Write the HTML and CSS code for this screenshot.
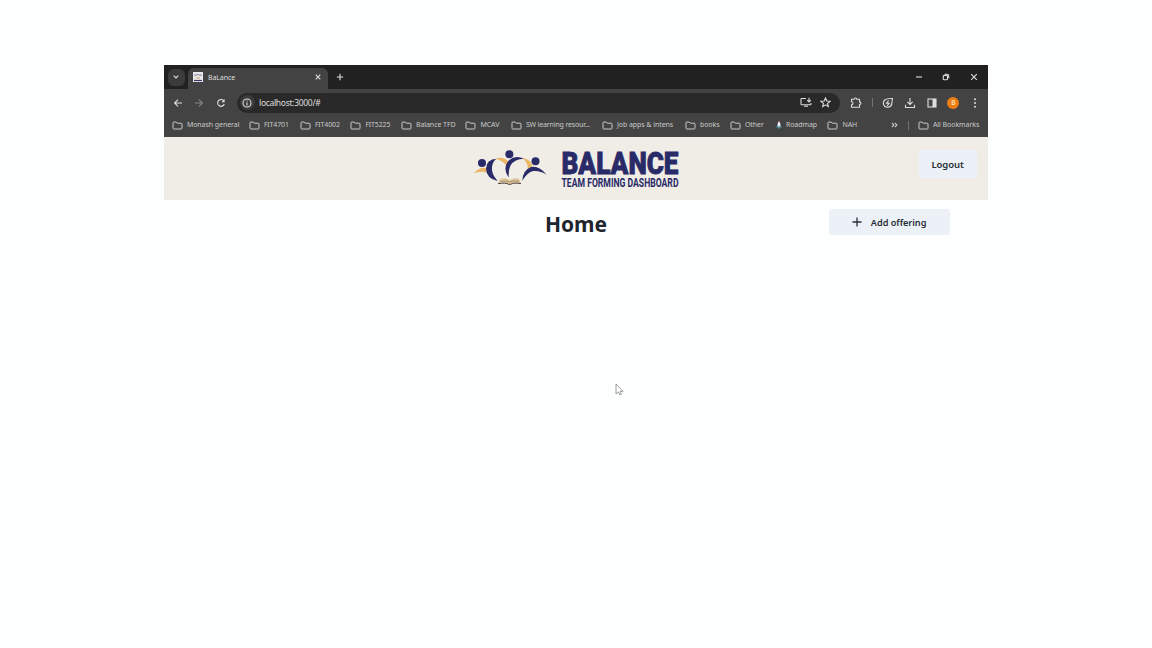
FILE: index.html
```html
<!DOCTYPE html>
<html lang="en">
<head>
<meta charset="utf-8">
<title>BaLance</title>
<link rel="stylesheet" href="styles.css">
</head>
<body>
<svg width="0" height="0" class="defs">
  <symbol id="folder" viewBox="0 0 11 9"><path d="M1 7.2V1.8Q1 1 1.8 1H4l1.2 1.2h4Q10 2.2 10 3v4.2q0 .8-.8.8H1.8Q1 8 1 7.200z" fill="none" stroke="currentColor" stroke-width="1"/></symbol>
</svg>
<div class="window">
  <div class="tabs">
    <span class="tab-search"><svg width="6" height="4" viewBox="0 0 6 4"><path d="M.7.7 3 3 5.300.7" class="line"/></svg></span>
    <div class="tab">
      <svg class="favicon" width="10" height="10" viewBox="0 0 10 10"><path fill="#e8e8ee" d="M0 0h10v10H0z"/><path d="M1 3.500q1-1.500 2 0 2-2.500 4 0 1-1.500 2 0" fill="none" stroke="#77778f" stroke-width=".9"/><path d="M1 8.500h8" stroke="#34345f" stroke-width="1.200"/><path d="M3 6h4" stroke="#d9a65c"/></svg>
      <span class="tab-title">BaLance</span>
      <svg class="close" width="6" height="6" viewBox="0 0 6 6"><path d="M.7.7l4.600 4.600M5.300.7.7 5.300" class="line"/></svg>
    </div>
    <svg class="new-tab" width="8" height="8" viewBox="0 0 8 8"><path d="M4 .8v6.400M.8 4h6.400" class="line"/></svg>
    <div class="controls">
      <svg width="8" height="8" viewBox="0 0 8 8"><path d="M1 4h6" class="line"/></svg>
      <svg width="8" height="8" viewBox="0 0 8 8"><rect x="1.200" y="2.400" width="4.300" height="4.300" rx="1" class="line"/><path d="M2.700 1.300h2.500q1.500 0 1.500 1.500v2.500" class="line"/></svg>
      <svg width="8" height="8" viewBox="0 0 8 8"><path d="M1.200 1.200l5.600 5.600M6.800 1.200 1.200 6.800" class="line"/></svg>
    </div>
  </div>
  <div class="toolbar">
    <div class="nav">
      <svg width="10" height="10" viewBox="0 0 10 10"><path d="M9 5H1.800M5 1.600 1.600 5 5 8.400" class="line"/></svg>
      <svg class="dim" width="10" height="10" viewBox="0 0 10 10"><path d="M1 5h7.200M5 1.600 8.400 5 5 8.400" class="line"/></svg>
      <svg width="10" height="10" viewBox="0 0 10 10"><path d="M8 3.200A3.400 3.400 0 1 0 8.300 6" class="line"/><path d="M8.600 1v3.300H5.300z" fill="currentColor"/></svg>
    </div>
    <div class="address">
      <span class="info"><svg width="10" height="10" viewBox="0 0 10 10"><circle cx="5" cy="5" r="4" class="line"/><path d="M5 4.400v3M5 2.400v1.100" class="line"/></svg></span>
      <span class="url">localhost:3000/#</span>
      <svg class="install" width="12" height="11" viewBox="0 0 12 11"><path d="M6 1.500H1.800q-.8 0-.8.8V7q0 .8.800.8h8.400q.8 0 .8-.8V6M4 9.300h4M9 .8v4M7.200 3.200 9 5l1.800-1.800" class="line"/></svg>
      <svg class="star" width="11" height="11" viewBox="0 0 11 11"><path d="M5.500 1l1.300 3 3.200.3-2.400 2.100.7 3.200-2.800-1.700-2.800 1.700.7-3.200L1 4.300 4.200 4z" class="line"/></svg>
    </div>
    <div class="tools">
      <svg width="12" height="12" viewBox="0 0 12 12"><path d="M1.500 2.200h2.700q.1-1.200 1.300-1.200t1.300 1.200h2.700v2.700q1.400.1 1.400 1.300T9.500 7.500v2.700h-8V7.800q1.500-.2 1.500-1.600T1.500 4.700z" class="line"/></svg>
      <i class="rule"></i>
      <svg width="12" height="12" viewBox="0 0 12 12"><path d="M10.500 1.500Q5 1.200 2.800 3q-2.300 2-1 5 1 2.500 4 2.300Q9 10 9.800 7q.2-3 .7-5.500zM6.700 3.500 4.500 6.200h2.700L5 9" class="line"/></svg>
      <svg width="12" height="12" viewBox="0 0 12 12"><path d="M6 1v6.300M3.300 4.800 6 7.500l2.700-2.700M1.500 7.800v2.700h9V7.800" class="line"/></svg>
      <svg width="12" height="12" viewBox="0 0 12 12"><rect x="2" y="2" width="8" height="8" class="line"/><path d="M6.500 2H10v8H6.500z" fill="currentColor"/></svg>
      <span class="avatar">B</span>
      <svg width="12" height="12" viewBox="0 0 12 12" fill="currentColor"><circle cx="6" cy="2.300" r="1"/><circle cx="6" cy="6" r="1"/><circle cx="6" cy="9.700" r="1"/></svg>
    </div>
  </div>
  <div class="bookmarks">
    <span class="mark"><svg><use href="#folder"/></svg>Monash general</span>
    <span class="mark tight"><svg><use href="#folder"/></svg>FIT4701</span>
    <span class="mark tight"><svg><use href="#folder"/></svg>FIT4002</span>
    <span class="mark tight"><svg><use href="#folder"/></svg>FIT5225</span>
    <span class="mark"><svg><use href="#folder"/></svg>Balance TFD</span>
    <span class="mark"><svg><use href="#folder"/></svg>MCAV</span>
    <span class="mark tight"><svg><use href="#folder"/></svg>SW learning resour...</span>
    <span class="mark"><svg><use href="#folder"/></svg>Job apps &amp; intens</span>
    <span class="mark"><svg><use href="#folder"/></svg>books</span>
    <span class="mark"><svg><use href="#folder"/></svg>Other</span>
    <span class="mark rocket"><svg viewBox="0 0 6 9"><path d="M3 0q2 2 1.500 5.500h-3Q1 2 3 0z" fill="#f3f6fa"/><path d="M1.500 4 .3 6.500h1.500zM4.500 4l1.200 2.500H4.200z" fill="#62b5ee"/><path d="M2 6h2L3 8.500z" fill="#45b584"/><path d="M2.300 1.200h1.400L3 0z" fill="#e5544a"/></svg>Roadmap</span>
    <span class="mark"><svg><use href="#folder"/></svg>NAH</span>
    <svg class="more" viewBox="0 0 7 6"><path d="M.8.8 3 3 .8 5.200M3.800.8 6 3 3.800 5.200" class="line"/></svg>
    <i class="rule"></i>
    <span class="mark"><svg><use href="#folder"/></svg>All Bookmarks</span>
  </div>
  <header class="banner">
    <svg class="logo" width="206" height="40" viewBox="474 148 206 40">
      <g transform="translate(465 140) scale(.33333)">
        <path d="M27 100Q43 80 64 84L66 97Q45 92 27 100z" fill="#eab766"/>
        <path d="M92 56Q110 49 125 59 134 67 127 83 119 63 92 56z" fill="#eab766"/>
        <path d="M172 54Q196 57 202 77 200 84 188 87 190 68 172 54z" fill="#eab766"/>
        <g fill="#292a68">
          <circle cx="51" cy="69" r="12"/><circle cx="133" cy="43" r="12"/><circle cx="211.500" cy="64" r="12"/>
          <path d="M95 56Q64 57 63 86q1 29 35 37-20-22-17-43 3-18 14-24z"/>
          <path d="M177 56Q151 44 132 61q-21 23-1 52-1-24 6-37 12-20 40-20z"/>
          <path d="M172 122Q173 91 198 81q24-5 47 23-20-13-40-11-18 4-33 29z"/>
        </g>
        <path d="M106 116q17-4 28 4 12-8 28-4l6 14q-20-4-30 3h-8q-10-7-31-3z" fill="#dfc59a"/>
        <path d="M99 131q24-4 32 2h6q9-6 31-2" fill="none" stroke="#4a3e3e" stroke-width="3"/>
        <path d="M106 124q19-3 28 2 12-5 28-2" fill="none" stroke="#8d7860" stroke-width="2"/>
      </g>
      <text x="561.500" y="174" class="brand" textLength="117" lengthAdjust="spacingAndGlyphs">BALANCE</text>
      <text x="561.500" y="187.300" class="tagline" textLength="117" lengthAdjust="spacingAndGlyphs">TEAM FORMING DASHBOARD</text>
    </svg>
    <button class="btn logout">Logout</button>
  </header>
  <main class="content">
    <h1>Home</h1>
    <button class="btn add"><svg width="10" height="10" viewBox="0 0 10 10"><path d="M5 .5v9M.5 5h9" fill="none" stroke="#2b2f38" stroke-width="1.300"/></svg>Add offering</button>
  </main>
</div>
<svg class="cursor" width="9" height="13" viewBox="0 0 9 13"><path d="M1 1v10l2.400-2 1.500 3 1.500-.8L5 8.400h3z" fill="#fff" stroke="#85858a" stroke-width=".8"/></svg>
</body>
</html>
```
FILE: styles.css
```css
* { box-sizing: border-box; }
body {
  margin: 0;
  height: 648px;
  padding: 65px 164.400px 0 164.400px;
  overflow: hidden;
  background: #fdfefe;
  font-family: "Noto Sans", sans-serif;
}
svg { display: block; flex: none; }
.defs { position: absolute; }
.line { fill: none; stroke: currentColor; stroke-width: 1.1; }
.window { color: #dedede; }

.tabs { display: flex; height: 24px; background: #212121; }
.tab-search {
  display: flex; align-items: center; justify-content: center;
  width: 17px; height: 17px; margin: 3.500px 3px 0 3.600px;
  border-radius: 6px; background: #3b3b3b;
}
.tab {
  display: flex; align-items: center;
  width: 140px; height: 21px; margin-top: 3px; padding: 0 7px 3px 5px;
  border-radius: 6px 6px 0 0; background: #434343;
}
.tab-title { margin-left: 5px; font-size: 7px; letter-spacing: -.1px; }
.close { margin-left: auto; }
.new-tab { margin: 8px 0 0 8px; }
.controls { display: flex; gap: 19.500px; margin: 8px 10px 0 auto; }

.toolbar { display: flex; align-items: center; height: 26px; padding-top: 1px; background: #434343; }
.nav { display: flex; gap: 11.500px; margin-left: 8.600px; }
.dim { color: #858585; }
.address {
  display: flex; align-items: center;
  width: 603px; height: 20px; margin-left: 11px; padding: 0 8.500px 0 3px;
  border-radius: 10px; background: #292929;
}
.info {
  display: flex; align-items: center; justify-content: center;
  width: 15px; height: 15px; border-radius: 50%; background: #3c3c3c;
}
.url { margin-left: 4px; font-size: 8.500px; letter-spacing: -.3px; }
.install { margin-left: auto; margin-right: 8px; }
.tools { display: flex; align-items: center; gap: 9.800px; margin-left: 9.900px; }
.rule { width: 1px; height: 9px; background: #737373; }
.tools .rule { margin-right: -.5px; }
.avatar {
  width: 12px; height: 12px; border-radius: 50%;
  background: #ec7c14; color: #ffe0ba;
  font-size: 6.500px; font-weight: 600; line-height: 12px; text-align: center;
}

.bookmarks {
  display: grid;
  grid-template-columns: 77px 51px 50.500px 50.500px 64.500px 45.500px 91px 83px 45px 46px 51.500px 63.500px 17px 10px 61px;
  align-items: center;
  height: 22px; padding: 0 0 2px 7.500px;
  background: #434343; color: #c9c9c9;
}
.mark { display: flex; align-items: center; gap: 4px; font-size: 7px; line-height: 10px; letter-spacing: -.06px; white-space: nowrap; }
.mark svg { width: 11px; height: 9px; }
.tight { letter-spacing: -.15px; }
.rocket svg { width: 6px; height: 9px; }
.more { width: 7px; height: 6px; }

.banner {
  display: grid; grid-template-columns: 309.600px 1fr auto;
  height: 63px; padding: 11px 11px 0 0;
  background: #f0ede6;
}
.logo { grid-column: 2; overflow: visible; }
.brand { fill: #292a68; stroke: #292a68; stroke-width: .8; font: 900 31.500px Roboto, sans-serif; }
.tagline { fill: #292a68; font: 700 13px Roboto, sans-serif; }
.btn {
  display: flex; align-items: center; justify-content: center;
  border: 0; padding: 0; border-radius: 3.500px;
  background: #ebf1f6; color: #292d36;
  font-family: "Noto Sans", sans-serif; font-weight: 600;
}
.logout { width: 58px; height: 28px; margin-top: 2px; font-size: 9.500px; letter-spacing: -.1px; }
.content { display: grid; grid-template-columns: 1fr auto 1fr; padding: 9px 38px 0; }
h1 {
  grid-column: 2; margin: 0; padding-top: 1px;
  color: #20242c; font-size: 21px; line-height: 29px; font-weight: 700;
}
.add { justify-self: end; width: 121px; height: 26px; gap: 9px; font-size: 9.200px; letter-spacing: -.05px; }
.cursor { position: absolute; left: 614.500px; top: 383px; }
```
